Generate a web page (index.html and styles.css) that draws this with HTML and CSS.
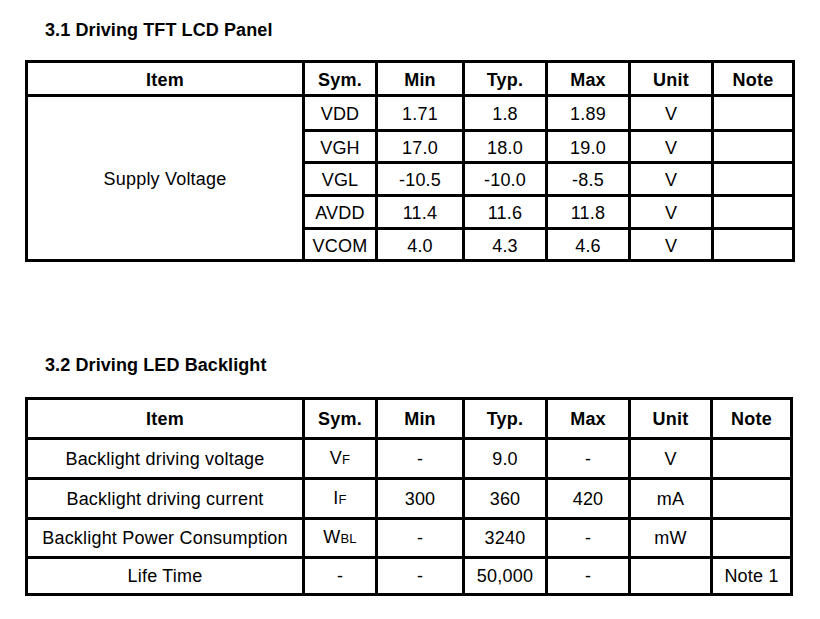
FILE: index.html
```html
<!DOCTYPE html>
<html>
<head>
<meta charset="utf-8">
<link rel="stylesheet" href="styles.css">
</head>
<body>
<h2 class="title first">3.1 Driving TFT LCD Panel</h2>
<table class="spec panel">
  <colgroup>
    <col class="c-item"><col class="c-sym"><col class="c-min"><col class="c-typ"><col class="c-max"><col class="c-unit"><col class="c-note">
  </colgroup>
  <tr class="hdr h1"><th>Item</th><th>Sym.</th><th>Min</th><th>Typ.</th><th>Max</th><th>Unit</th><th>Note</th></tr>
  <tr class="r35"><td rowspan="5">Supply Voltage</td><td>VDD</td><td>1.71</td><td>1.8</td><td>1.89</td><td>V</td><td></td></tr>
  <tr class="r32"><td>VGH</td><td>17.0</td><td>18.0</td><td>19.0</td><td>V</td><td></td></tr>
  <tr class="r33"><td>VGL</td><td>-10.5</td><td>-10.0</td><td>-8.5</td><td>V</td><td></td></tr>
  <tr class="r33"><td>AVDD</td><td>11.4</td><td>11.6</td><td>11.8</td><td>V</td><td></td></tr>
  <tr class="r32"><td>VCOM</td><td>4.0</td><td>4.3</td><td>4.6</td><td>V</td><td></td></tr>
</table>

<h2 class="title second">3.2 Driving LED Backlight</h2>
<table class="spec narrow">
  <colgroup>
    <col class="c-item"><col class="c-sym"><col class="c-min"><col class="c-typ"><col class="c-max"><col class="c-unit2"><col class="c-note2">
  </colgroup>
  <tr class="hdr h2"><th>Item</th><th>Sym.</th><th>Min</th><th>Typ.</th><th>Max</th><th>Unit</th><th>Note</th></tr>
  <tr class="r40"><td>Backlight driving voltage</td><td>V<span class="sub">F</span></td><td>-</td><td>9.0</td><td>-</td><td>V</td><td></td></tr>
  <tr class="r40"><td>Backlight driving current</td><td>I<span class="sub">F</span></td><td>300</td><td>360</td><td>420</td><td>mA</td><td></td></tr>
  <tr class="r39"><td>Backlight Power Consumption</td><td>W<span class="sub">BL</span></td><td>-</td><td>3240</td><td>-</td><td>mW</td><td></td></tr>
  <tr class="r37"><td>Life Time</td><td>-</td><td>-</td><td>50,000</td><td>-</td><td></td><td>Note 1</td></tr>
</table>
</body>
</html>
```

FILE: styles.css
```css
html, body {
  margin: 0;
  padding: 0;
  background: #ffffff;
}
body {
  font-family: "Liberation Sans", Arial, sans-serif;
  color: #000000;
}
.title {
  margin: 0;
  padding-left: 45px;
  font-size: 18px;
  font-weight: bold;
  line-height: 21px;
  letter-spacing: 0.1px;
}
.title.first {
  padding-top: 20px;
  margin-bottom: 19px;
}
.title.second {
  margin-top: 93px;
  margin-bottom: 21px;
}
.spec {
  margin-left: 25px;
  border-collapse: separate;
  border-spacing: 0;
  table-layout: fixed;
  width: 770px;
  border-top: 3px solid #000;
  border-left: 3px solid #000;
}
.spec.narrow {
  width: 768px;
}
.spec th, .spec td {
  box-sizing: border-box;
  border-right: 3px solid #000;
  border-bottom: 3px solid #000;
  padding: 0;
  text-align: center;
  vertical-align: middle;
  font-size: 18px;
  line-height: 20px;
  letter-spacing: 0.2px;
  white-space: nowrap;
}
.spec.panel th, .spec.panel td {
  padding-top: 2px;
}
.spec th {
  font-weight: bold;
}
.c-item { width: 277px; }
.c-sym { width: 73px; }
.c-min { width: 87px; }
.c-typ { width: 83px; }
.c-max { width: 83px; }
.c-unit { width: 83px; }
.c-note { width: 81px; }
.c-unit2 { width: 82px; }
.c-note2 { width: 80px; }
.h1 { height: 34px; }
.h2 { height: 40px; }
.r32 { height: 32px; }
.r33 { height: 33px; }
.r35 { height: 35px; }
.r37 { height: 37px; }
.r39 { height: 39px; }
.r40 { height: 40px; }
.sub {
  font-size: 13px;
}
```
